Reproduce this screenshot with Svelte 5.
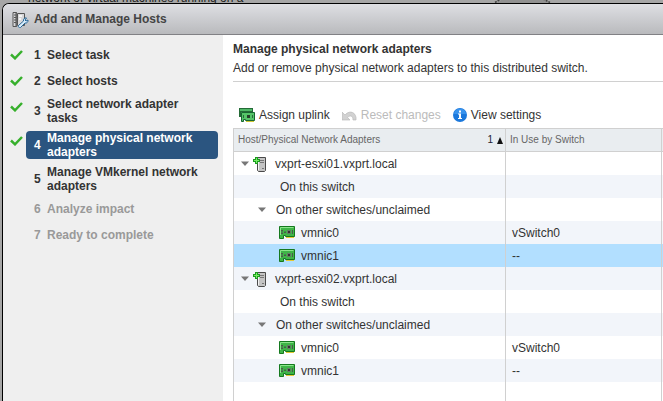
<script>
  const steps = [
    { label: 'Select task', state: 'done' },
    { label: 'Select hosts', state: 'done' },
    { label: 'Select network adapter tasks', state: 'done' },
    { label: 'Manage physical network adapters', state: 'current' },
    { label: 'Manage VMkernel network adapters', state: 'next' },
    { label: 'Analyze impact', state: 'disabled' },
    { label: 'Ready to complete', state: 'disabled' }
  ];

  const hostRows = (name, selected) => [
    { kind: 'host', label: name },
    { kind: 'group', label: 'On this switch' },
    { kind: 'group', label: 'On other switches/unclaimed', open: true },
    { kind: 'nic', label: 'vmnic0', usedBy: 'vSwitch0' },
    { kind: 'nic', label: 'vmnic1', usedBy: '--', selected }
  ];

  const rows = [
    ...hostRows('vxprt-esxi01.vxprt.local', true),
    ...hostRows('vxprt-esxi02.vxprt.local', false)
  ];
</script>

{#snippet card()}
  <path d="M.5.5h15v10h-9v-1h-2v3h-4z" fill="#3fb548" stroke="#15791f" />
  <path d="M1.500 9V1.500h13" stroke="#8be58b" fill="none" />
  <path d="M7 11.500h8" stroke="#e3c936" />
  <path d="M2 4h2v1.500H2zM2 6.500h2V8H2zM5 5.500h2v1.500H5zM13 4h1v4h-1z" fill="#4a5a4c" />
  <path d="M8.500 4.500h3v3h-3z" fill="#333" stroke="#667a66" />
{/snippet}

{#snippet twisty()}
  <button class="twisty" aria-label="Collapse">
    <svg width="8" height="5" viewBox="0 0 8 5"><path d="M0 .5h8L4 5z" fill="#777" /></svg>
  </button>
{/snippet}

<div class="page">
  <div class="behind" aria-hidden="true">
    <span>network of virtual machines running on a</span>
    <svg width="58" height="4" viewBox="0 0 58 4">
      <path d="M2 4L9 0H48L56 4z" fill="#919191" />
      <path d="M1 3.500L7 0M49 0l7 3.500" stroke="#444" stroke-width="1.500" stroke-dasharray="2 1" />
    </svg>
  </div>

  <section class="dialog" aria-labelledby="title">
    <header>
      <svg width="17" height="17" viewBox="0 0 17 17" fill="none">
        <path d="M1 1.500h3v14H1zM5.500 2.500h7v12h-7z" fill="#d8d8da" stroke="#555" />
        <path d="M4.500 1v15" stroke="#666" />
        <path d="M2 4h2M2 6.500h2M2 9h2M2 11.500h2" stroke="#555" />
        <path d="M7 5h3M7 8h2" stroke="#f5f5f5" stroke-width="2" />
        <path d="M6.500 14.500l5-4.500c-.5-2 1-3.500 3-3l-1.500 2 1 1 2-1c.3 2-1.300 3.500-3 3l-4.500 4.500c-1 .8-2.800-.8-2-2z" fill="#d9edfb" stroke="#286797" />
      </svg>
      <h1 id="title">Add and Manage Hosts</h1>
    </header>

    <div class="body">
      <nav aria-label="Wizard steps">
        <ol>
          {#each steps as step, i}
            <li>
              <span class="mark">
                {#if step.state === 'done' || step.state === 'current'}
                  <svg width="13" height="10" viewBox="0 0 13 10">
                    <path d="M1 4.500l4 3.800L12 1" fill="none" stroke="#37b02c" stroke-width="2.500" />
                  </svg>
                {/if}
              </span>
              <button class="step {step.state}" disabled={step.state === 'disabled'}>
                <span class="num">{i + 1}</span>
                <span>{step.label}</span>
              </button>
            </li>
          {/each}
        </ol>
      </nav>

      <main>
        <div class="intro">
          <h2>Manage physical network adapters</h2>
          <p>Add or remove physical network adapters to this distributed switch.</p>
        </div>

        <div class="toolbar">
          <button>
            <svg width="16" height="15" viewBox="0 0 16 15">
              <path d="M0 0h14v9H0z" fill="#246b37" />
              <path d="M1 1h12v2H1z" fill="#4fb866" />
              <path d="M2 4h1v2H2z" fill="#79d889" />
              <path d="M2.500 4.500h13v8h-9v-1h-2v2h-2z" fill="#55c568" stroke="#176630" />
              <path d="M4 7h1v3H4zM13 7h1v3h-1z" fill="#286b3b" />
              <path d="M8 7h3v3H8z" fill="#263f2c" />
              <path d="M7 13.500h8" stroke="#cfc735" />
            </svg>
            Assign uplink
          </button>
          <button disabled>
            <svg width="15" height="11" viewBox="0 0 15 11">
              <path d="M0 2v8h8L5.500 7.500C8 5 11 5.500 11 10h3c1-7-6-11-11-5z" fill="#d2d2d2" stroke="#bcbcbc" stroke-width=".7" />
            </svg>
            Reset changes
          </button>
          <button>
            <svg width="14" height="14" viewBox="0 0 14 14">
              <circle cx="7" cy="7" r="7" fill="#1b78dc" />
              <path d="M1 6a6 5.500 0 0 1 12 0z" fill="#3893ee" />
              <path d="M6 2.500h2v2H6zM5 5.500h3V10h1v1H5v-1h1V6.500H5z" fill="#fff" />
            </svg>
            View settings
          </button>
        </div>

        <div class="grid">
          <table>
            <colgroup><col class="c1" /><col class="c2" /><col /></colgroup>
            <thead>
              <tr>
                <th scope="col" aria-sort="ascending">
                  <div class="head">
                    <span>Host/Physical Network Adapters</span>
                    <span class="sort">1
                      <svg width="6" height="7" viewBox="0 0 6 7"><path d="M3 0l3 7H0z" fill="#111" /></svg>
                    </span>
                  </div>
                </th>
                <th scope="col">In Use by Switch</th>
                <td></td>
              </tr>
            </thead>
            <tbody>
              {#each rows as row}
                <tr class:selected={row.selected}>
                  <td>
                    <div class="cell {row.kind}" class:open={row.open}>
                      {#if row.kind === 'host'}
                        {@render twisty()}
                        <svg width="14" height="16" viewBox="0 0 14 16">
                          <path d="M5 1.500h7.500v13l-1 1H5.500l-1-1v-13z" fill="#c4c4c4" stroke="#4a4a4a" />
                          <path d="M5.500 3v11" stroke="#f2f2f2" />
                          <path d="M7 4.500h4M7 6.500h4M9 12.500h2" stroke="#777" />
                          <path d="M3.500 1v7M0 4.500h7" stroke="#1c9a20" stroke-width="3" />
                          <path d="M3.500 2v5M1 4.500h5" stroke="#74ef62" />
                        </svg>
                      {:else if row.kind === 'nic'}
                        <svg width="16" height="13" viewBox="0 0 16 13">{@render card()}</svg>
                      {:else if row.open}
                        {@render twisty()}
                      {/if}
                      <span>{row.label}</span>
                    </div>
                  </td>
                  <td>{row.usedBy ?? ''}</td>
                  <td></td>
                </tr>
              {/each}
              <tr class="rest"><td></td><td></td><td></td></tr>
            </tbody>
          </table>
        </div>
      </main>
    </div>
  </section>
</div>

<style>
  :global(body) {
    background: #a6a6a6;
    overflow: hidden;
  }
  .page {
    height: 100vh;
    display: flex;
    flex-direction: column;
    overflow: hidden;
    font: 12px/14px "Liberation Sans", Arial, sans-serif;
    color: #333;
  }
  .behind {
    flex: none;
    height: 3px;
    display: flex;
    align-items: flex-end;
    justify-content: space-between;
    padding: 0 111px 0 28px;
    overflow: hidden;
  }
  .behind span { color: #222; font-size: 12px; line-height: 10px; }
  .dialog {
    flex: 1;
    min-height: 0;
    display: flex;
    flex-direction: column;
    margin-left: 2px;
    border: 1px solid #000;
    border-width: 1px 0 0 1px;
    border-radius: 7px 0 0 0;
    background: #fff;
    overflow: hidden;
  }
  header {
    flex: none;
    display: flex;
    align-items: center;
    gap: 5px;
    height: 30px;
    padding-left: 9px;
    border-bottom: 1px solid #818185;
    background: linear-gradient(#dedfe3, #b9babd);
  }
  h1, h2, p, ol { margin: 0; padding: 0; font-size: 12px; }
  h1 { color: #444; }
  button {
    font: inherit;
    color: inherit;
    background: none;
    border: 0;
    padding: 0;
    text-align: left;
  }
  svg { flex: none; display: block; }
  .body { flex: 1; min-height: 0; display: flex; }
  nav { flex: none; width: 220px; background: #efefef; }
  ol {
    list-style: none;
    display: flex;
    flex-direction: column;
    gap: 6px;
    padding: 10px 5px 0 7px;
  }
  li { display: flex; }
  .mark { flex: none; width: 16px; padding-top: 5px; }
  .step {
    flex: 1;
    display: flex;
    align-items: center;
    min-height: 20px;
    padding: 0 8px;
    border-radius: 4px;
    font-weight: bold;
  }
  .num { flex: none; width: 13px; }
  .current { background: #2b5580; color: #fff; }
  .disabled { color: #999; }
  main {
    flex: 1;
    min-width: 0;
    display: flex;
    flex-direction: column;
    padding: 7px 0 0 10px;
  }
  .intro {
    display: flex;
    flex-direction: column;
    gap: 5px;
    padding-bottom: 6px;
    border-bottom: 1px solid #d0d0d0;
  }
  .toolbar {
    display: flex;
    align-items: center;
    gap: 12px;
    height: 20px;
    padding: 23px 0 3px 6px;
  }
  .toolbar button {
    display: flex;
    align-items: center;
    gap: 4px;
    white-space: nowrap;
  }
  .toolbar button:disabled { color: #bbb; }
  .grid { flex: 1; min-height: 0; border-top: 1px solid #d0d0d0; border-left: 1px solid #d0d0d0; }
  table {
    width: 100%;
    height: 100%;
    table-layout: fixed;
    border-spacing: 0;
  }
  .c1 { width: 272px; }
  .c2 { width: 156px; }
  th, td { padding: 0 0 0 6px; text-align: left; }
  th:not(:last-child), td:not(:last-child) { border-right: 1px solid #d0d0d0; }
  td:first-child, th:first-child { padding-left: 0; }
  thead th, thead td {
    height: 22px;
    border-bottom: 1px solid #d0d0d0;
    background: #e9edf0;
    font-size: 10px;
    font-weight: normal;
    color: #666;
  }
  th:nth-child(2) { padding-left: 4px; }
  .head { display: flex; justify-content: space-between; padding: 0 2px 0 4px; }
  .sort { display: flex; align-items: center; gap: 4px; color: #223; }
  tbody td { height: 23px; }
  tbody tr:nth-child(even) { background: #f2f5fa; }
  tbody tr.selected { background: #b2dfff; }
  tbody tr.rest { background: #fff; }
  .rest td { height: auto; }
  .cell { display: flex; align-items: center; white-space: nowrap; }
  .host { padding-left: 7px; gap: 8px; }
  .host .twisty { margin-right: -4px; }
  .group { padding-left: 46px; }
  .group.open { padding-left: 24px; gap: 10px; }
  .nic { padding-left: 45px; gap: 6px; }
</style>
